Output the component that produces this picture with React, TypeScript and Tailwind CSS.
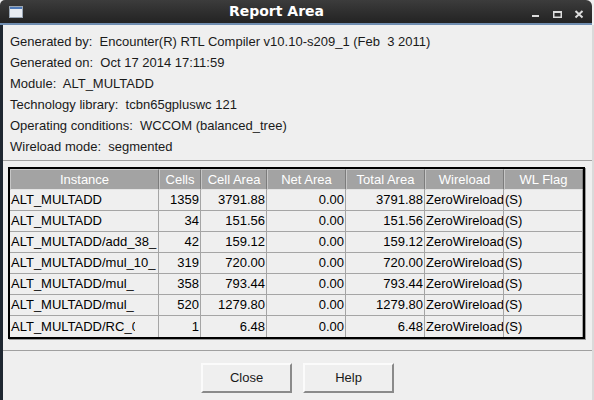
import React from "react";

const cols = [
  { name: "Instance", w: 149, align: "left" },
  { name: "Cells", w: 42, align: "right" },
  { name: "Cell Area", w: 66, align: "right" },
  { name: "Net Area", w: 79, align: "right" },
  { name: "Total Area", w: 79, align: "right" },
  { name: "Wireload", w: 79, align: "left" },
  { name: "WL Flag", w: 79, align: "left" },
];

const rows: string[][] = [
  ["ALT_MULTADD", "1359", "3791.88", "0.00", "3791.88", "ZeroWireload", "(S)"],
  ["ALT_MULTADD", "34", "151.56", "0.00", "151.56", "ZeroWireload", "(S)"],
  ["ALT_MULTADD/add_38_", "42", "159.12", "0.00", "159.12", "ZeroWireload", "(S)"],
  ["ALT_MULTADD/mul_10_", "319", "720.00", "0.00", "720.00", "ZeroWireload", "(S)"],
  ["ALT_MULTADD/mul_", "358", "793.44", "0.00", "793.44", "ZeroWireload", "(S)"],
  ["ALT_MULTADD/mul_", "520", "1279.80", "0.00", "1279.80", "ZeroWireload", "(S)"],
  ["ALT_MULTADD/RC_", "1", "6.48", "0.00", "6.48", "ZeroWireload", "(S)"],
];

const info = [
  "Generated by:  Encounter(R) RTL Compiler v10.10-s209_1 (Feb  3 2011)",
  "Generated on:  Oct 17 2014 17:11:59",
  "Module:  ALT_MULTADD",
  "Technology library:  tcbn65gpluswc 121",
  "Operating conditions:  WCCOM (balanced_tree)",
  "Wireload mode:  segmented",
];

function Btn({ label }: { label: string }) {
  return (
    <div className="w-[91px] h-[30px] flex items-center justify-center bg-[#efefef] border-t-2 border-l-2 border-t-[#fbfbfb] border-l-[#fbfbfb] border-b-2 border-r-2 border-b-[#8a8a8a] border-r-[#8a8a8a] text-[13px] text-[#1a1a1a]">
      {label}
    </div>
  );
}

export default function App() {
  return (
    <div className="w-[594px] h-[400px] bg-[#efefef] flex flex-col overflow-hidden font-['Liberation_Sans',Arial,sans-serif]">
      {/* title bar */}
      <div className="h-[25px] flex items-stretch bg-gradient-to-b from-[#3c3c3c] to-[#232323] rounded-tl-[5px] rounded-tr-[6px] mr-[2px] border-b-2 border-b-[#6f8db0]">
        <div className="w-[23px] pl-[9px] flex items-center">
          <svg width="14" height="12" viewBox="0 0 14 12">
            <rect x="0.5" y="0.5" width="13" height="11" fill="#e8ecf2" stroke="#9aa6b4" />
            <rect x="1" y="1" width="12" height="2" fill="#4e79b8" />
          </svg>
        </div>
        <div className="flex-1 flex items-center justify-center text-white font-bold text-[14px] font-['DejaVu_Sans',sans-serif]">
          Report Area
        </div>
        <div className="w-[62px] relative">
          <svg width="62" height="23" viewBox="0 0 62 23" className="absolute left-0 top-0">
            <rect x="2" y="15" width="7" height="2" fill="#dcdcdc" />
            <rect x="23.75" y="11.75" width="7.5" height="5.5" fill="none" stroke="#dcdcdc" strokeWidth="1.5" />
            <rect x="23" y="11" width="9" height="2" fill="#dcdcdc" />
            <path d="M45.5 11 L52.5 17.5 M52.5 11 L45.5 17.5" stroke="#dcdcdc" strokeWidth="2" />
          </svg>
        </div>
      </div>

      {/* body */}
      <div className="flex-1 flex flex-col border-l-[3px] border-l-[#1e2731] border-r-2 border-r-[#dadada]">
        <div className="pt-[6px] pl-[7px]">
          {info.map((t, i) => (
            <div key={i} className="h-[21px] leading-[21px] text-[13px] text-[#1a1a1a] whitespace-pre">
              {t}
            </div>
          ))}
        </div>

        <div className="mt-[3px] border-t border-b border-[#a0a0a0] pt-[6px] pb-[11px] pl-[5px]">
          <div className="w-[577px] border-2 border-black shadow-[1px_1px_0_#9a9a9a] text-[13px]">
            <div className="flex h-[21px]">
              {cols.map((c, i) => (
                <div
                  key={i}
                  style={{ width: c.w }}
                  className="h-[21px] flex items-center justify-center bg-[#a3a3a3] text-white border-t border-l border-t-[#c6c6c6] border-l-[#c6c6c6] border-r border-b border-r-[#7c7c7c] border-b-[#e4e4e4]"
                >
                  {c.name}
                </div>
              ))}
            </div>
            {rows.map((r, ri) => (
              <div key={ri} className="flex h-[21px]">
                {r.map((v, ci) => (
                  <div
                    key={ci}
                    style={{ width: cols[ci].w }}
                    className={
                      "h-[21px] flex items-center overflow-hidden whitespace-nowrap text-black border-r border-[#a5a5a5] " +
                      (ri < rows.length - 1 ? "border-b " : "") +
                      (cols[ci].align === "right" ? "justify-end pr-[1px]" : "justify-start pl-[1px]")
                    }
                  >
                    {v}
                    {ri === 6 && ci === 0 ? (
                      <span className="inline-block w-[3px] overflow-hidden">0</span>
                    ) : null}
                  </div>
                ))}
              </div>
            ))}
          </div>
        </div>

        <div className="flex justify-center gap-[11px] pt-[12px]">
          <Btn label="Close" />
          <Btn label="Help" />
        </div>
      </div>
    </div>
  );
}
